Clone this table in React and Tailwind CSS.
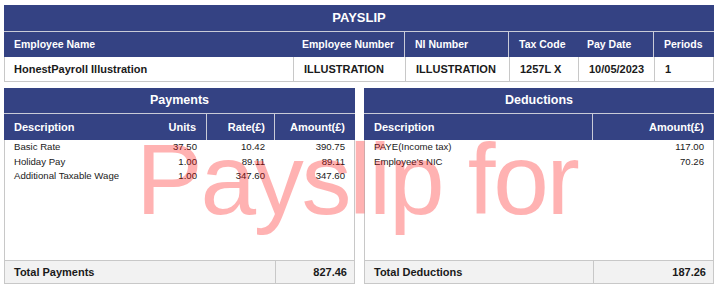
import React from "react";

const payments = [
  { desc: "Basic Rate", units: "37.50", rate: "10.42", amount: "390.75" },
  { desc: "Holiday Pay", units: "1.00", rate: "89.11", amount: "89.11" },
  { desc: "Additional Taxable Wage", units: "1.00", rate: "347.60", amount: "347.60" },
];

const deductions = [
  { desc: "PAYE(Income tax)", amount: "117.00" },
  { desc: "Employee's NIC", amount: "70.26" },
];

const App = () => {
  return (
    <main className="relative h-[289px] w-[720px] overflow-hidden bg-white px-[4px] pt-[5px] font-['Liberation_Sans',Arial,sans-serif] text-[#1a1a1a]">
      {/* header table */}
      <section className="w-[710px]">
        <div className="flex h-[26px] items-center justify-center bg-[#344283] text-[13px] font-bold text-white">
          PAYSLIP
        </div>
        <div className="grid h-[26px] grid-cols-[288px_112px_104px_69px_76px_61px] border-t border-[#c9cbd8] bg-[#344283] text-[10.5px] font-bold text-white">
          <div className="flex items-center pl-[10px]">Employee Name</div>
          <div className="flex items-center pl-[10px]">Employee Number</div>
          <div className="flex items-center border-l border-[#c9cbd8] pl-[10px]">NI Number</div>
          <div className="flex items-center border-l border-[#c9cbd8] pl-[10px]">Tax Code</div>
          <div className="flex items-center pl-[10px]">Pay Date</div>
          <div className="flex items-center border-l border-[#c9cbd8] pl-[10px]">Periods</div>
        </div>
        <div className="grid h-[25px] grid-cols-[288px_112px_104px_69px_76px_61px] border-x border-b border-[#c8c8c8] text-[11px] font-bold">
          <div className="flex items-center pl-[9px]">HonestPayroll Illustration</div>
          <div className="flex items-center border-l border-[#c8c8c8] pl-[10px]">ILLUSTRATION</div>
          <div className="flex items-center border-l border-[#c8c8c8] pl-[10px]">ILLUSTRATION</div>
          <div className="flex items-center border-l border-[#c8c8c8] pl-[10px]">1257L X</div>
          <div className="flex items-center border-l border-[#c8c8c8] pl-[10px]">10/05/2023</div>
          <div className="flex items-center border-l border-[#c8c8c8] pl-[10px]">1</div>
        </div>
      </section>

      <div className="mt-[6px] grid w-[710px] grid-cols-[351px_350px] gap-[9px]">
        {/* payments */}
        <section>
          <div className="flex h-[25px] items-center justify-center bg-[#344283] text-[12.5px] font-bold text-white">
            Payments
          </div>
          <div className="grid h-[27px] grid-cols-[130px_72px_68px_81px] border-t border-[#c9cbd8] bg-[#344283] text-[11px] font-bold text-white">
            <div className="flex items-center pl-[10px]">Description</div>
            <div className="flex items-center justify-end pr-[10px]">Units</div>
            <div className="flex items-center justify-end border-l border-[#c9cbd8] pr-[9px]">Rate(£)</div>
            <div className="flex items-center justify-end border-l border-[#c9cbd8] pr-[10px]">Amount(£)</div>
          </div>
          <div className="h-[120px] border-x border-[#c8c8c8] text-[9.6px]">
            {payments.map((row) => (
              <div key={row.desc} className="grid h-[14.5px] grid-cols-[129px_72px_68px_80px] leading-[14.5px]">
                <div className="pl-[9px]">{row.desc}</div>
                <div className="pr-[9px] text-right">{row.units}</div>
                <div className="pr-[9px] text-right">{row.rate}</div>
                <div className="pr-[9px] text-right">{row.amount}</div>
              </div>
            ))}
          </div>
          <div className="grid h-[24px] grid-cols-[270px_81px] border border-[#c8c8c8] bg-[#f2f2f2] text-[11px] font-bold">
            <div className="flex items-center pl-[9px]">Total Payments</div>
            <div className="flex items-center justify-end border-l border-[#c8c8c8] pr-[9px]">827.46</div>
          </div>
        </section>

        {/* deductions */}
        <section>
          <div className="flex h-[25px] items-center justify-center bg-[#344283] text-[12.5px] font-bold text-white">
            Deductions
          </div>
          <div className="grid h-[27px] grid-cols-[228px_122px] border-t border-[#c9cbd8] bg-[#344283] text-[11px] font-bold text-white">
            <div className="flex items-center pl-[10px]">Description</div>
            <div className="flex items-center justify-end border-l border-[#c9cbd8] pr-[10px]">Amount(£)</div>
          </div>
          <div className="h-[120px] border-x border-[#c8c8c8] text-[9.6px]">
            {deductions.map((row) => (
              <div key={row.desc} className="grid h-[14.5px] grid-cols-[227px_121px] leading-[14.5px]">
                <div className="pl-[9px]">{row.desc}</div>
                <div className="pr-[9px] text-right">{row.amount}</div>
              </div>
            ))}
          </div>
          <div className="grid h-[24px] grid-cols-[228px_122px] border border-[#c8c8c8] bg-[#f2f2f2] text-[11px] font-bold">
            <div className="flex items-center pl-[9px]">Total Deductions</div>
            <div className="flex items-center justify-end border-l border-[#c8c8c8] pr-[9px]">187.26</div>
          </div>
        </section>
      </div>

      {/* watermark */}
      <div className="pointer-events-none absolute left-[136px] top-[129px] z-10 whitespace-nowrap text-[100px] leading-none tracking-[-2.3px] text-[#ff0000]/30">
        Payslip for
      </div>
    </main>
  );
};

export default App;
